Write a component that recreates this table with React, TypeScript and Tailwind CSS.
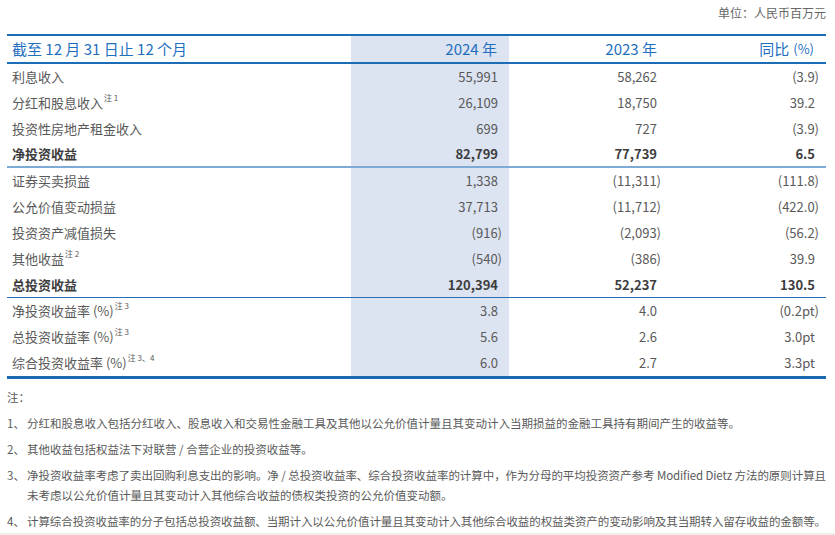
import React from 'react';

type Row = {
  label: string;
  sup?: string;
  a: string;
  b: string;
  c: string;
  bold?: boolean;
  line?: 'light' | 'dark';
};

const rows: Row[] = [
  { label: '利息收入', a: '55,991', b: '58,262', c: '(3.9)' },
  { label: '分红和股息收入', sup: '1', a: '26,109', b: '18,750', c: '39.2' },
  { label: '投资性房地产租金收入', a: '699', b: '727', c: '(3.9)' },
  { label: '净投资收益', a: '82,799', b: '77,739', c: '6.5', bold: true, line: 'light' },
  { label: '证券买卖损益', a: '1,338', b: '(11,311)', c: '(111.8)' },
  { label: '公允价值变动损益', a: '37,713', b: '(11,712)', c: '(422.0)' },
  { label: '投资资产减值损失', a: '(916)', b: '(2,093)', c: '(56.2)' },
  { label: '其他收益', sup: '2', a: '(540)', b: '(386)', c: '39.9' },
  { label: '总投资收益', a: '120,394', b: '52,237', c: '130.5', bold: true, line: 'dark' },
  { label: '净投资收益率 (%) ', sup: '3', a: '3.8', b: '4.0', c: '(0.2pt)' },
  { label: '总投资收益率 (%) ', sup: '3', a: '5.6', b: '2.6', c: '3.0pt' },
  { label: '综合投资收益率 (%) ', sup: '3、4', a: '6.0', b: '2.7', c: '3.3pt' },
];

function Num({ v }: { v: string }) {
  return <span className={v.endsWith(')') ? 'mr-[-4px]' : ''}>{v}</span>;
}

export default function App() {
  const font = { fontFamily: '"Noto Sans CJK SC", "Noto Sans", sans-serif' };
  return (
    <div className="w-[835px] h-[535px] bg-white overflow-hidden flex flex-col text-[#595959]" style={font}>
      <div className="pl-[7px] pr-[9px]">
        <div className="h-[34px] flex justify-end items-start pt-[4px] text-[12px] leading-[18px] text-[#666]">
          单位：人民币百万元
        </div>
        <div className="grid grid-cols-[344px_158px_160px_157px]">
          <div className="h-[30px] border-t-2 border-b-2 border-[#1b6db5] flex items-center pl-[5px] text-[15px] text-[#1f6fbf]">
            截至 12 月 31 日止 12 个月
          </div>
          <div className="h-[30px] border-t-2 border-b-2 border-[#1b6db5] bg-[#dce3f1] flex items-center justify-end pr-[12px] text-[15px] text-[#1f6fbf]">
            2024 年
          </div>
          <div className="h-[30px] border-t-2 border-b-2 border-[#1b6db5] flex items-center justify-end pr-[12px] text-[15px] text-[#1f6fbf]">
            2023 年
          </div>
          <div className="h-[30px] border-t-2 border-b-2 border-[#1b6db5] flex items-center justify-end pr-[12px] text-[15px] text-[#1f6fbf]">
            同比 <span className="ml-[4px] text-[13px]">(%)</span>
          </div>
          {rows.map((r, i) => {
            const last = i === rows.length - 1;
            const border = last
              ? 'border-b-[3px] border-[#1a68b0]'
              : r.line === 'light'
              ? 'border-b-2 border-[#7eaad6]'
              : r.line === 'dark'
              ? 'border-b border-[#2a6fb3]'
              : '';
            const h = last ? 'h-[29px]' : 'h-[26px]';
            const weight = r.bold ? 'font-bold text-[#3d3d3d]' : '';
            return (
              <React.Fragment key={i}>
                <div className={`${h} ${border} ${weight} flex items-center pl-[5px] text-[13px]`}>
                  <span>{r.label}</span>
                  {r.sup && (
                    <span className="ml-[1px] text-[8px] self-start mt-[4px] leading-none">注{' '}{r.sup}</span>
                  )}
                </div>
                <div className={`${h} ${border} ${weight} bg-[#dce3f1] flex items-center justify-end pr-[11px] text-[13px]`}>
                  <Num v={r.a} />
                </div>
                <div className={`${h} ${border} ${weight} flex items-center justify-end pr-[12px] text-[13px]`}>
                  <Num v={r.b} />
                </div>
                <div className={`${h} ${border} ${weight} flex items-center justify-end pr-[11px] text-[13px]`}>
                  <Num v={r.c} />
                </div>
              </React.Fragment>
            );
          })}
        </div>
        <div className="mt-[8px] text-[11.5px] leading-[20px] text-[#5a5a5a] flex flex-col gap-[6px]">
          <div>注：</div>
          <div className="flex">
            <span className="w-[20px] shrink-0">1、</span>
            <span>分红和股息收入包括分红收入、股息收入和交易性金融工具及其他以公允价值计量且其变动计入当期损益的金融工具持有期间产生的收益等。</span>
          </div>
          <div className="flex">
            <span className="w-[20px] shrink-0">2、</span>
            <span>其他收益包括权益法下对联营 / 合营企业的投资收益等。</span>
          </div>
          <div className="flex">
            <span className="w-[20px] shrink-0">3、</span>
            <div className="flex-1 min-w-0 flex flex-col">
              <div className="whitespace-nowrap tracking-[-0.12px] [text-align-last:justify]">
                净投资收益率考虑了卖出回购利息支出的影响。净 / 总投资收益率、综合投资收益率的计算中，作为分母的平均投资资产参考 Modified Dietz 方法的原则计算且
              </div>
              <div>未考虑以公允价值计量且其变动计入其他综合收益的债权类投资的公允价值变动额。</div>
            </div>
          </div>
          <div className="flex">
            <span className="w-[20px] shrink-0">4、</span>
            <div className="flex-1 min-w-0 whitespace-nowrap tracking-[-0.12px] [text-align-last:justify]">
              计算综合投资收益率的分子包括总投资收益额、当期计入以公允价值计量且其变动计入其他综合收益的权益类资产的变动影响及其当期转入留存收益的金额等。
            </div>
          </div>
        </div>
      </div>
      <div className="mt-auto h-[2px] bg-[#efeee6]" />
    </div>
  );
}
